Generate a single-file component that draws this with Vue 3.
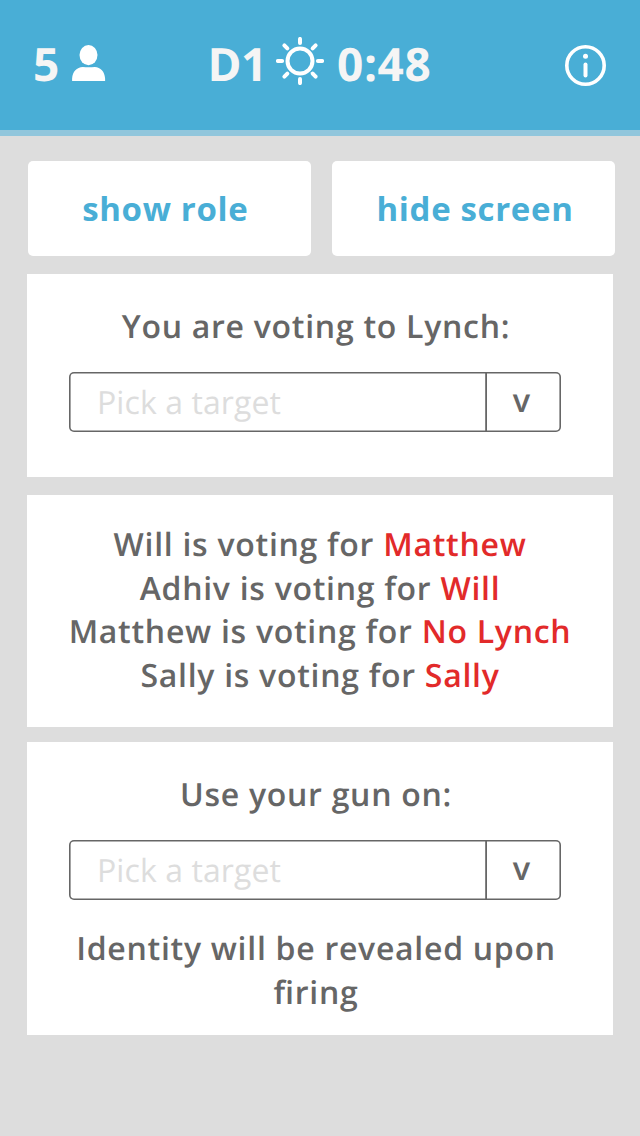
<script setup>
const votes = [
  { voter: 'Will', target: 'Matthew' },
  { voter: 'Adhiv', target: 'Will' },
  { voter: 'Matthew', target: 'No Lynch' },
  { voter: 'Sally', target: 'Sally' },
]
const rays = [0, 45, 90, 135, 180, 225, 270, 315]
</script>

<template>
  <div class="screen">
    <header class="bar">
      <div class="players">
        <span>5</span>
        <svg class="person" width="34" height="37" viewBox="0 0 34 37">
          <ellipse cx="16.500" cy="10.1" rx="9" ry="10.1" />
          <path d="M0.100 36V33.500C0.600 26.500 4.800 22.200 10.800 22C14.800 22.300 18.800 22.300 22.800 22C28.600 22.200 32.600 26.500 33.100 33.500V36Z" />
        </svg>
      </div>
      <div class="clock">
        <span class="day">D1</span>
        <svg class="sun" width="48" height="48" viewBox="0 0 48 48">
          <circle cx="24" cy="24" r="12.5" />
          <path v-for="a in rays" :key="a" d="M24 1.900V6.100" :transform="`rotate(${a} 24 24)`" />
        </svg>
        <span class="time">0:48</span>
      </div>
      <svg class="info" width="41" height="41" viewBox="0 0 41 41">
        <circle class="ring" cx="20.500" cy="20.500" r="18.700" />
        <circle class="dot" cx="20.500" cy="11.300" r="2.500" />
        <path class="stem" d="M20.500 19.500V30.500" />
      </svg>
    </header>

    <main class="content">
      <div class="actions">
        <button class="action role">show role</button>
        <button class="action hide">hide screen</button>
      </div>

      <section class="card lynch">
        <p class="text">You are voting to Lynch:</p>
        <div class="select">
          <span class="placeholder">Pick a target</span>
          <span class="arrow">v</span>
        </div>
      </section>

      <section class="card votes">
        <p v-for="v in votes" :key="v.voter" class="text">
          {{ v.voter }} is voting for <span class="target">{{ v.target }}</span>
        </p>
      </section>

      <section class="card gun">
        <p class="text">Use your gun on:</p>
        <div class="select">
          <span class="placeholder">Pick a target</span>
          <span class="arrow">v</span>
        </div>
        <p class="text note">Identity will be revealed upon firing</p>
      </section>
    </main>
  </div>
</template>

<style>
body {
  margin: 0;
  background: #dddddd;
}
</style>

<style scoped>
.screen {
  width: 640px;
  height: 1136px;
  overflow: hidden;
  background: #dddddd;
  font-family: "Open Sans", "Noto Sans", sans-serif;
  color: #666666;
  text-rendering: geometricPrecision;
}
.bar {
  box-sizing: border-box;
  height: 136px;
  display: flex;
  align-items: flex-start;
  padding: 32px 33px 0 33px;
  background: #49aed6;
  border-bottom: 6px solid #91c6dc;
  color: #f5f5f5;
  font-size: 46px;
  font-weight: 700;
  line-height: 64px;
}
.players {
  display: flex;
  width: 175px;
}
.person {
  margin: 13px 0 0 12.500px;
  fill: #fff;
}
.clock {
  display: flex;
  width: 357px;
}
.day {
  width: 68px;
  margin-left: -0.500px;
  letter-spacing: -0.500px;
}
.sun {
  margin: 5px 0 0 0.500px;
  fill: none;
  stroke: #fff;
  stroke-width: 4;
  stroke-linecap: round;
}
.time {
  margin-left: 13px;
  letter-spacing: 0.600px;
}
.info {
  margin-top: 13px;
  flex: none;
}
.ring {
  fill: none;
  stroke: #fff;
  stroke-width: 3.600;
}
.dot {
  fill: #fff;
}
.stem {
  stroke: #fff;
  stroke-width: 4;
  stroke-linecap: round;
}
.content {
  padding: 25px 25px 0 27px;
}
.actions {
  display: flex;
  gap: 21.500px;
  padding-left: 1px;
  margin-bottom: 18px;
}
.action {
  height: 95px;
  width: 282.700px;
  border: 0;
  border-radius: 5px;
  background: #fff;
  color: #49aed6;
  font: 700 33px/43px "Open Sans", "Noto Sans", sans-serif;
  letter-spacing: 0.02em;
  padding: 0 0 0 3px;
}
.role {
  padding: 0 8px 0 0;
}
.card {
  box-sizing: border-box;
  width: 586px;
  background: #fff;
}
.text {
  margin: 0;
  font-size: 32px;
  font-weight: 600;
  line-height: 43.600px;
  letter-spacing: 0.720px;
  font-feature-settings: "liga" 1;
  text-align: center;
}
.lynch {
  height: 203px;
  padding: 31px 50px 0 42px;
  margin-bottom: 18px;
}
.votes {
  height: 232px;
  padding-top: 28px;
  margin-bottom: 15px;
}
.gun {
  height: 293px;
  padding: 31px 50px 0 42px;
}
.target {
  color: #e22a2a;
}
.select {
  box-sizing: border-box;
  display: flex;
  width: 492px;
  height: 60px;
  margin-top: 23.400px;
  border-radius: 5px;
  box-shadow: inset 0 0 0 1.600px #666;
}
.placeholder {
  box-sizing: border-box;
  width: 418px;
  flex: none;
  padding-left: 28px;
  font-size: 32px;
  line-height: 61px;
  letter-spacing: 0.080px;
  color: #dddddd;
  box-shadow: inset -1.800px 0 0 #666;
}
.arrow {
  flex: 1;
  padding-right: 5px;
  text-align: center;
  font-size: 32.500px;
  font-weight: 600;
  line-height: 55px;
}
.note {
  margin-top: 27px;
}
</style>
